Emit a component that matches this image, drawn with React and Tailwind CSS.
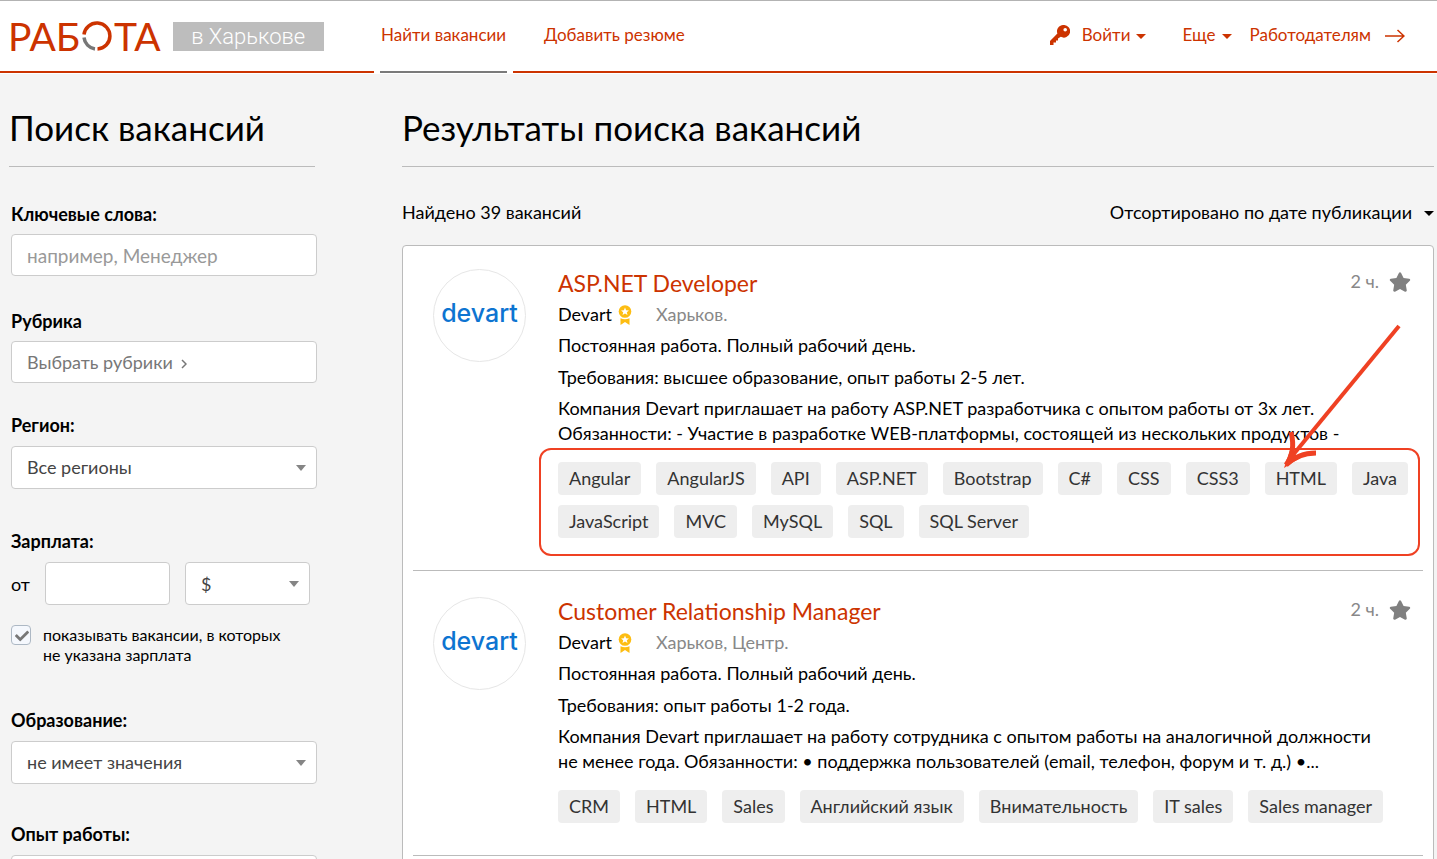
import React, {useState} from 'react';
import {FaStar, FaCheck} from 'react-icons/fa';

const jobs = [
  {
    id: 1,
    title: 'ASP.NET Developer',
    company: 'Devart',
    place: 'Харьков.',
    time: '2 ч.',
    type: 'Постоянная работа. Полный рабочий день.',
    needs: 'Требования: высшее образование, опыт работы 2-5 лет.',
    text: 'Компания Devart приглашает на работу ASP.NET разработчика с опытом работы от 3х лет. Обязанности: - Участие в разработке WEB-платформы, состоящей из нескольких продуктов -',
    tags: [
      'Angular',
      'AngularJS',
      'API',
      'ASP.NET',
      'Bootstrap',
      'C#',
      'CSS',
      'CSS3',
      'HTML',
      'Java',
      'JavaScript',
      'MVC',
      'MySQL',
      'SQL',
      'SQL Server',
    ],
    marked: true,
  },
  {
    id: 2,
    title: 'Customer Relationship Manager',
    company: 'Devart',
    place: 'Харьков, Центр.',
    time: '2 ч.',
    type: 'Постоянная работа. Полный рабочий день.',
    needs: 'Требования: опыт работы 1-2 года.',
    text: 'Компания Devart приглашает на работу сотрудника с опытом работы на аналогичной должности не менее года. Обязанности: • поддержка пользователей (email, телефон, форум и т. д.) •...',
    tags: [
      'CRM',
      'HTML',
      'Sales',
      'Английский язык',
      'Внимательность',
      'IT sales',
      'Sales manager',
    ],
  },
];

function Logo() {
  return (
    <a href="#home" className="flex items-center" aria-label="Работа в Харькове">
      <span className="flex items-center text-[39px] leading-[30px] text-[#cc3300]">
        РАБ
        <svg width="30" height="30" viewBox="0 0 30 30" className="mx-0.5" fill="none" strokeWidth="3.5">
          <path d="M2 13.5A13 13 0 1 1 15.5 28" stroke="#cc3300" />
          <path d="M2 16.5A13 13 0 0 0 13 28" stroke="#777" />
        </svg>
        ТА
      </span>
      <span className="ml-3 flex h-[29px] w-[151px] items-center justify-center bg-[#bdbdbd] font-['Roboto',sans-serif] text-[22px] font-light text-white">
        в Харькове
      </span>
    </a>
  );
}

function MenuCaret() {
  return (
    <svg width="10" height="5" viewBox="0 0 10 5" className="ml-1.5 mt-0.5" fill="currentColor">
      <path d="M0 0H10L5 5Z" />
    </svg>
  );
}

function Header() {
  return (
    <header className="flex h-[74px] gap-1.5 border-t border-[#b3b3b3] bg-white pb-px text-[17px] text-[#cc3300]">
      <div className="flex w-[374px] items-center border-b-2 border-[#cc3300] pl-2">
        <Logo />
      </div>
      <a href="#jobs" className="flex items-center whitespace-nowrap border-b-2 border-[#7a7a7a] px-px pb-0.5">
        Найти вакансии
      </a>
      <nav className="flex flex-1 items-center border-b-2 border-[#cc3300] pb-0.5 pl-[31px] pr-8">
        <a href="#resume">Добавить резюме</a>
        <button type="button" className="ml-auto flex items-center">
          <svg width="20" height="20" viewBox="0 0 20 20" className="mr-3" fill="currentColor">
            <path
              fillRule="evenodd"
              d="M13.5 0A6.3 6.3 0 0 0 7.4 8.6L0 16V20H3.5V17.5H6V15.5H8V13.5L10.8 11.8A6.3 6.3 0 1 0 13.5 0ZM15.2 3A1.8 1.8 0 1 1 15.2 6.6A1.8 1.8 0 0 1 15.2 3Z"
            />
          </svg>
          Войти
          <MenuCaret />
        </button>
        <button type="button" className="ml-9 flex items-center">
          Еще
          <MenuCaret />
        </button>
        <a href="#employers" className="ml-[18px] flex items-center">
          Работодателям
          <svg width="20" height="14" viewBox="0 0 20 14" className="ml-3.5 mt-0.5" fill="none" stroke="currentColor" strokeWidth="1.5">
            <path d="M0 7H19M12.5 1L19 7L12.5 13" />
          </svg>
        </a>
      </nav>
    </header>
  );
}

function Caret() {
  return (
    <svg width="10" height="6" viewBox="0 0 10 6" className="pointer-events-none absolute right-[11px] top-[19px]">
      <path d="M0 0H10L5 6Z" fill="#858585" />
    </svg>
  );
}

function Select({id, label, value}) {
  return (
    <div>
      <label htmlFor={id} className="block font-bold leading-5">
        {label}
      </label>
      <div className="relative mt-[11px]">
        <select
          id={id}
          className="h-[43px] w-full appearance-none rounded border border-[#ccc] bg-white px-[15px] pb-0.5 text-[#444]"
        >
          <option>{value}</option>
        </select>
        <Caret />
      </div>
    </div>
  );
}

function Sidebar() {
  const [noSalary, setNoSalary] = useState(true);

  return (
    <aside className="w-[306px] shrink-0">
      <h2 className="border-b border-[#bbb] pb-[17px] text-[35px] leading-[43px]">Поиск вакансий</h2>
      <form className="ml-0.5 w-full pt-[37px] text-lg">
        <label htmlFor="keywords" className="block font-bold leading-5">
          Ключевые слова:
        </label>
        <input
          id="keywords"
          type="text"
          placeholder="например, Менеджер"
          className="mt-2.5 h-[42px] w-full rounded border border-[#ccc] bg-white px-[15px] text-[19px] placeholder:text-[#999]"
        />
        <div className="mt-[35px]">
          <span id="rubric" className="block font-bold leading-5">
            Рубрика
          </span>
          <button
            type="button"
            aria-labelledby="rubric"
            className="mt-2.5 flex h-[42px] w-full items-center rounded border border-[#ccc] bg-white px-[15px] text-[#777]"
          >
            Выбрать рубрики
            <svg width="6" height="10" viewBox="0 0 6 10" className="ml-2 mt-1" fill="none" stroke="currentColor" strokeWidth="1.5">
              <path d="M1 1L5 5L1 9" />
            </svg>
          </button>
        </div>
        <div className="mt-8">
          <Select id="region" label="Регион:" value="Все регионы" />
        </div>
        <div className="mt-[42px]">
          <label htmlFor="salary" className="block font-bold leading-5">
            Зарплата:
          </label>
          <div className="mt-[11px] flex items-center">
            <span className="w-[34px]">от</span>
            <input
              id="salary"
              type="text"
              className="h-[43px] w-[125px] rounded border border-[#ccc] bg-white px-[15px]"
            />
            <div className="relative ml-[15px] w-[125px]">
              <select
                aria-label="Валюта"
                className="h-[43px] w-full appearance-none rounded border border-[#ccc] bg-white px-[15px] text-[#444]"
              >
                <option>$</option>
              </select>
              <Caret />
            </div>
          </div>
        </div>
        <label className="mt-5 flex items-start text-base leading-5">
          <span className="relative mr-3 size-5 shrink-0">
            <input
              type="checkbox"
              checked={noSalary}
              onChange={() => setNoSalary(!noSalary)}
              className="block size-5 appearance-none rounded border border-[#adb8c4] bg-[#f5f8fd]"
            />
            {noSalary && <FaCheck className="pointer-events-none absolute left-1 top-1 size-3.5 text-[#777]" />}
          </span>
          <span>
            показывать вакансии, в которых
            <br />
            не указана зарплата
          </span>
        </label>
        <div className="mt-[45px]">
          <Select id="education" label="Образование:" value="не имеет значения" />
        </div>
        <div className="mt-10">
          <Select id="experience" label="Опыт работы:" value="не имеет значения" />
        </div>
      </form>
    </aside>
  );
}

function Medal() {
  return (
    <svg width="14" height="20" viewBox="0 0 14 20" className="ml-1.5" fill="#fdbd12">
      <path d="M2.5 13.2Q7 15.5 11.5 13.2V20L7 17L2.5 20Z" />
      <circle cx="7" cy="6.5" r="6.3" />
      <path d="M7 2.5L8.1 5.2L11 5.4L8.8 7.3L9.5 10.1L7 8.6L4.5 10.1L5.2 7.3L3 5.4L5.9 5.2Z" fill="#fff" />
    </svg>
  );
}

// red frame round the tags with a hand-drawn arrow
function Mark() {
  return (
    <div className="pointer-events-none absolute -bottom-[18px] -left-[19px] -right-[9px] -top-[14px] rounded-xl border-2 border-[#ef4123]">
      <svg
        width="124"
        height="150"
        viewBox="0 0 124 150"
        className="absolute -top-[128px] right-3.5"
        fill="none"
        stroke="#ef4123"
      >
        <path d="M119 4L8 139" strokeWidth="4" />
        <path d="M11 110C14 122 13 134 6 143C14 135 24 131 36 131" strokeWidth="5" />
        <path d="M4 146L10 128L20 136Z" fill="#ef4123" stroke="none" />
      </svg>
    </div>
  );
}

function Job({job}) {
  return (
    <article className="mx-2.5 flex border-b border-[#bbb] pb-8 pl-5 pr-3 pt-[26px] first:pt-[23px]">
      <div className="flex size-[93px] shrink-0 items-center justify-center rounded-full border border-[#e6e6e6] pb-1 font-['Inter',sans-serif] text-[25px] font-medium text-[#0d74d1]">
        devart
      </div>
      <div className="ml-8 min-w-0 flex-1 text-lg leading-[25px]">
        <div className="flex items-start">
          <h3 className="text-[23px] leading-7">
            <a href="#job" className="text-[#cc3300]">
              {job.title}
            </a>
          </h3>
          <span className="ml-auto text-[#888]">{job.time}</span>
          <button type="button" aria-label="В избранное" className="ml-2.5 mt-0.5 text-[#808080]">
            <FaStar className="size-[22px]" />
          </button>
        </div>
        <div className="mt-[5px] flex items-center">
          <span>{job.company}</span>
          <Medal />
          <span className="ml-6 text-[#888]">{job.place}</span>
        </div>
        <p className="mt-1.5">{job.type}</p>
        <p className="mt-[7px]">{job.needs}</p>
        <p className="mt-1.5 pr-5">{job.text}</p>
        <div className="relative mt-4">
          <ul className="flex flex-wrap gap-x-[15px] gap-y-2.5">
            {job.tags.map((tag) => (
              <li key={tag}>
                <a href="#tag" className="block h-[33px] rounded bg-[#eee] px-[11px] leading-[33px] text-[#333]">
                  {tag}
                </a>
              </li>
            ))}
          </ul>
          {job.marked && <Mark />}
        </div>
      </div>
    </article>
  );
}

export default function App() {
  return (
    <div className="h-screen overflow-hidden bg-[#f4f4f4] font-['Lato',sans-serif] text-black">
      <Header />
      <div className="flex gap-[87px] pl-[9px] pr-[3px] pt-8">
        <Sidebar />
        <main className="min-w-0 flex-1">
          <h1 className="border-b border-[#bbb] pb-[17px] text-[35px] leading-[43px]">Результаты поиска вакансий</h1>
          <div className="flex items-center justify-between pb-5 pt-[33px] text-lg leading-[25px]">
            <span>Найдено 39 вакансий</span>
            <button type="button" className="flex items-center">
              Отсортировано по дате публикации
              <svg width="10" height="5" viewBox="0 0 10 5" className="ml-3 mt-0.5">
                <path d="M0 0H10L5 5Z" />
              </svg>
            </button>
          </div>
          <div className="rounded border border-[#bbb] bg-white pb-10">
            {jobs.map((job) => (
              <Job key={job.id} job={job} />
            ))}
          </div>
        </main>
      </div>
    </div>
  );
}
